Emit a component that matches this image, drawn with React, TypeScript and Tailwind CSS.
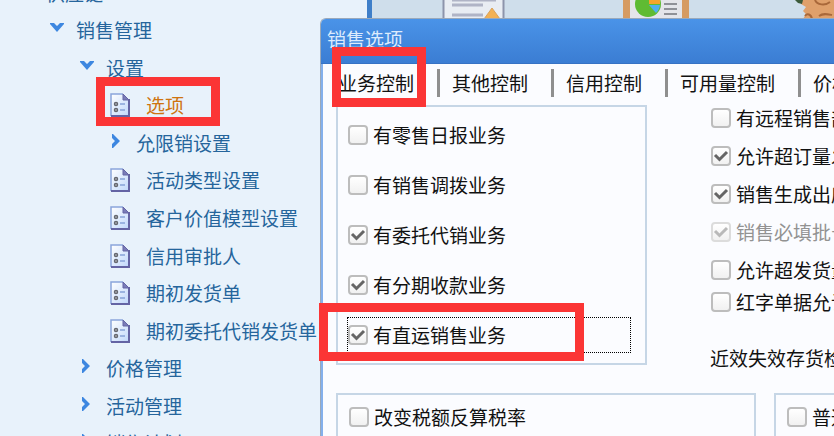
import { useState } from 'react';
import clsx from 'clsx';

interface TreeNode {
  label: string;
  kind: 'open' | 'closed' | 'leaf';
  level: 1 | 2 | 3 | 4;
  active?: boolean;
}

interface Option {
  id: string;
  label: string;
  checked?: boolean;
  disabled?: boolean;
}

const tree: TreeNode[] = [
  { label: '供应链', kind: 'open', level: 1 },
  { label: '销售管理', kind: 'open', level: 2 },
  { label: '设置', kind: 'open', level: 3 },
  { label: '选项', kind: 'leaf', level: 4, active: true },
  { label: '允限销设置', kind: 'closed', level: 4 },
  { label: '活动类型设置', kind: 'leaf', level: 4 },
  { label: '客户价值模型设置', kind: 'leaf', level: 4 },
  { label: '信用审批人', kind: 'leaf', level: 4 },
  { label: '期初发货单', kind: 'leaf', level: 4 },
  { label: '期初委托代销发货单', kind: 'leaf', level: 4 },
  { label: '价格管理', kind: 'closed', level: 3 },
  { label: '活动管理', kind: 'closed', level: 3 },
  { label: '销售计划', kind: 'closed', level: 3 },
];

const tabs = ['业务控制', '其他控制', '信用控制', '可用量控制', '价格管理'];

const businessOptions: Option[] = [
  { id: 'retail', label: '有零售日报业务' },
  { id: 'transfer', label: '有销售调拨业务' },
  { id: 'consign', label: '有委托代销业务', checked: true },
  { id: 'installment', label: '有分期收款业务', checked: true },
  { id: 'direct', label: '有直运销售业务', checked: true },
];

const controlOptions: Option[] = [
  { id: 'remote', label: '有远程销售部门' },
  { id: 'over-order', label: '允许超订量发货', checked: true },
  { id: 'gen-out', label: '销售生成出库单', checked: true },
  { id: 'batch', label: '销售必填批号', checked: true, disabled: true },
  { id: 'over-ship', label: '允许超发货量开票' },
];

const indent = {
  1: 'pl-[20px]',
  2: 'pl-[50px]',
  3: 'pl-[80px]',
  4: 'pl-[110px]',
};

function Chevron({ open }: { open: boolean }) {
  return (
    <svg className="mb-1 h-[14px] w-[14px] shrink-0" viewBox="0 0 14 14" aria-hidden="true">
      {open ? (
        <path d="M0 2h4l3 3 3-3h4v1L7 11 0 3z" fill="#3d87e0" />
      ) : (
        <path d="M2 0v4l3 3-3 3v4h1l7-7-7-7z" fill="#3d87e0" />
      )}
    </svg>
  );
}

function SheetIcon() {
  return (
    <svg className="h-6 w-5 shrink-0" viewBox="0 0 20 24" aria-hidden="true">
      <defs>
        <linearGradient id="sheet" x1="0" y1="0" x2="1" y2="1">
          <stop offset="0" stopColor="#ffffff" />
          <stop offset="1" stopColor="#bfd7fb" />
        </linearGradient>
      </defs>
      <path d="M1 1h12l6 6v16H1z" fill="url(#sheet)" />
      <path d="M1 23V1h12" fill="none" stroke="#8aa5dc" strokeWidth="1.5" />
      <path d="M19 6v17H1" fill="none" stroke="#6464a4" strokeWidth="2" />
      <path d="M13 1v6h6z" fill="#7a7cb8" stroke="#6464a4" />
      <circle cx="6" cy="11" r="1.5" fill="#cfd3dc" stroke="#66686f" strokeWidth="1.5" />
      <circle cx="6" cy="17" r="1.5" fill="#cfd3dc" stroke="#66686f" strokeWidth="1.5" />
      <path d="M10 11h5M10 17h5" stroke="#86a3d8" strokeWidth="1.5" />
    </svg>
  );
}

function TreeItem({ node }: { node: TreeNode }) {
  const leaf = node.kind === 'leaf';
  return (
    <li className="flex items-center">
      <button
        type="button"
        className={clsx(
          'flex items-center whitespace-nowrap',
          indent[node.level],
          leaf ? 'gap-4' : 'gap-3',
          node.active ? 'text-[#cf7410]' : 'text-[#25659c]',
        )}
      >
        {leaf ? <SheetIcon /> : <Chevron open={node.kind === 'open'} />}
        {node.label}
      </button>
    </li>
  );
}

interface CheckOptionProps {
  option: Option;
  focused?: boolean;
  compact?: boolean;
}

function CheckOption({ option, focused = false, compact = false }: CheckOptionProps) {
  const [checked, setChecked] = useState(!!option.checked);
  return (
    <label
      htmlFor={option.id}
      className={clsx(
        'flex items-center gap-[5px] border whitespace-nowrap',
        compact ? 'h-8' : 'h-9',
        focused ? 'border-dotted border-black' : 'border-transparent',
        option.disabled ? 'text-[#929292]' : 'text-[#111111]',
      )}
    >
      <span className="grid h-5 w-5 shrink-0">
        <input
          id={option.id}
          type="checkbox"
          checked={checked}
          disabled={option.disabled}
          onChange={(e) => setChecked(e.target.checked)}
          className="col-start-1 row-start-1 h-5 w-5 appearance-none rounded border-2 border-[#bdbdbd] bg-linear-to-b from-white to-[#f1f1f1] disabled:border-[#dcdcdc]"
        />
        {checked && (
          <svg className="pointer-events-none col-start-1 row-start-1 h-5 w-5" viewBox="0 0 20 20" aria-hidden="true">
            <path
              d="M4 9l4.500 4.500L16 6"
              fill="none"
              stroke={option.disabled ? '#b9b9b9' : '#656565'}
              strokeWidth="3"
            />
          </svg>
        )}
      </span>
      {option.label}
    </label>
  );
}

function DesktopIcons() {
  return (
    <div className="flex h-[19px] items-start bg-[#cfdeeb] pl-[70px]">
      <svg className="h-[19px] w-[64px] shrink-0" viewBox="0 0 64 19" aria-hidden="true">
        <path d="M1 0h61v19H1z" fill="#e9edf3" />
        <path d="M1.500 0v19M61.500 0v19" stroke="#8d94ab" strokeWidth="2" />
        <path d="M10 5h31M10 15h31M10 0h44" stroke="#b0b4c6" strokeWidth="3" />
        <path d="M50 8 58 19H42z" fill="#f2b155" stroke="#d9a25a" />
      </svg>
      <svg className="ml-[117px] h-[19px] w-[68px] shrink-0" viewBox="0 0 68 19" aria-hidden="true">
        <path d="M0 0h66v19H0z" fill="#d69b62" />
        <path d="M7 0h52v19H7z" fill="#e4e5ea" />
        <circle cx="25" cy="4" r="13" fill="#5fbb33" />
        <path d="M26 4V0h11v4z" fill="#f4a52c" />
        <path d="M26 5h11a12 12 0 0 1-4 8z" fill="#4fb0ee" />
        <path d="M41 4h13M41 9h13M41 14h13" stroke="#8f9197" strokeWidth="2" />
      </svg>
      <svg className="ml-[104px] h-[19px] w-[40px] shrink-0" viewBox="0 0 40 19" aria-hidden="true">
        <path d="M5 0h35v19H8l3-5-3-3 3-4-5-3z" fill="#dfa06b" />
        <path d="M0 0h8l-1 4-4-1z" fill="#3b5a3a" />
        <path d="M20 0c2 5 10 6 15 2M17 19c-1-5-5-6-7-3M24 16c4-3 8-2 13-1" fill="none" stroke="#a9683a" strokeWidth="2" />
      </svg>
    </div>
  );
}

function OptionsDialog() {
  const [tab, setTab] = useState(tabs[0]);
  return (
    <section
      aria-label="销售选项"
      className="absolute top-[18px] right-0 bottom-0 left-[320px] flex flex-col overflow-hidden rounded-tl-md border-t border-l border-[#9aa9bb] bg-[#fbfcff] text-[#111111]"
    >
      <header className="flex h-[45px] shrink-0 items-center border-b border-[#3672c4] bg-linear-to-b from-[#4a93e8] to-[#3b7dd3] pb-1 pl-[6px]">
        <h1 className="text-[#dcebfd]">销售选项</h1>
      </header>

      <div className="flex flex-1 flex-col border-l-2 border-[#84b0ec] pl-[13px]">
        <div role="tablist" className="flex h-[38px] shrink-0 items-center pl-[2px]">
          {tabs.map((name, i) => (
            <div key={name} className="flex shrink-0 items-center">
              {i > 0 && <span className="mr-3 ml-[23px] h-[28px] w-[3px] bg-[#8f8f8f]" />}
              <button type="button" role="tab" aria-selected={tab === name} onClick={() => setTab(name)} className="whitespace-nowrap">
                {name}
              </button>
            </div>
          ))}
        </div>

        <div className="flex items-start">
          <fieldset className="mt-[3px] flex w-[311px] shrink-0 flex-col gap-[14px] border-2 border-[#c6d6e6] py-[10px] pr-[14px] pl-[9px]">
            {businessOptions.map((option) => (
              <CheckOption key={option.id} option={option} focused={option.id === 'direct'} />
            ))}
          </fieldset>

          <div className="ml-[63px] flex shrink-0 flex-col">
            <div className="flex flex-col gap-[6px]">
              {controlOptions.map((option) => (
                <CheckOption key={option.id} option={option} compact />
              ))}
            </div>
            <CheckOption option={{ id: 'red', label: '红字单据允许超发' }} compact />
            <p className="mt-[26px] whitespace-nowrap">近效失效存货检查</p>
          </div>
        </div>

        <div className="mt-[21px] flex flex-1 gap-[18px]">
          <fieldset className="w-[420px] shrink-0 border-2 border-[#c6d6e6] px-[10px] py-1">
            <CheckOption option={{ id: 'tax', label: '改变税额反算税率' }} />
          </fieldset>
          <fieldset className="min-w-0 flex-1 border-t-2 border-l-2 border-[#c6d6e6] px-[10px] py-1">
            <CheckOption option={{ id: 'invoice', label: '普通发票' }} />
          </fieldset>
        </div>
      </div>
    </section>
  );
}

export default function App() {
  return (
    <main className="relative flex h-screen overflow-hidden bg-[#e8f2fb] font-['Noto_Sans_CJK_SC',sans-serif] text-[19px] leading-[28px]">
      <nav className="w-[367px] shrink-0 overflow-hidden">
        <ul className="-mt-[26px] grid h-[488px] auto-rows-fr">
          {tree.map((node) => (
            <TreeItem key={node.label} node={node} />
          ))}
        </ul>
      </nav>
      <div className="min-w-0 flex-1 overflow-hidden border-l-[5px] border-[#3f7fc9]">
        <DesktopIcons />
      </div>

      <OptionsDialog />

      {/* callout frames */}
      <div className="pointer-events-none absolute top-[77px] left-[96px] h-[49px] w-[124px] border-[9px] border-[#fb3535]" />
      <div className="pointer-events-none absolute top-[47px] left-[332px] h-[60px] w-[94px] border-[9px] border-[#fb3535]" />
      <div className="pointer-events-none absolute top-[303px] left-[319px] h-[58px] w-[265px] border-[9px] border-[#fb3535]" />
    </main>
  );
}
